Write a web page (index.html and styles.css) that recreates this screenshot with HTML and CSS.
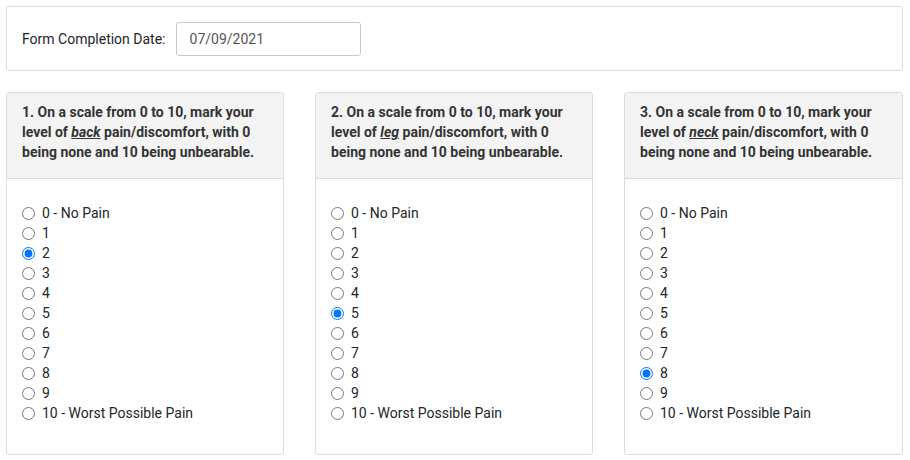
FILE: index.html
```html
<!DOCTYPE html>
<html>
<head>
<meta charset="utf-8">
<link rel="stylesheet" href="styles.css">
</head>
<body>
<div class="page">
  <div class="date-card">
    <label class="date-label" for="d">Form Completion Date:</label>
    <input class="date-input" id="d" type="text" value="07/09/2021">
  </div>
  <div class="cards">
    <div class="card">
      <div class="card-head">1. On a scale from 0 to 10, mark your level of <em>back</em> pain/discomfort, with 0 being none and 10 being unbearable.</div>
      <div class="card-body">
        <label class="opt"><input type="radio" name="q1"><span>0 - No Pain</span></label>
        <label class="opt"><input type="radio" name="q1"><span>1</span></label>
        <label class="opt"><input type="radio" name="q1" checked><span>2</span></label>
        <label class="opt"><input type="radio" name="q1"><span>3</span></label>
        <label class="opt"><input type="radio" name="q1"><span>4</span></label>
        <label class="opt"><input type="radio" name="q1"><span>5</span></label>
        <label class="opt"><input type="radio" name="q1"><span>6</span></label>
        <label class="opt"><input type="radio" name="q1"><span>7</span></label>
        <label class="opt"><input type="radio" name="q1"><span>8</span></label>
        <label class="opt"><input type="radio" name="q1"><span>9</span></label>
        <label class="opt"><input type="radio" name="q1"><span>10 - Worst Possible Pain</span></label>
      </div>
    </div>
    <div class="card">
      <div class="card-head">2. On a scale from 0 to 10, mark your level of <em>leg</em> pain/discomfort, with 0 being none and 10 being unbearable.</div>
      <div class="card-body">
        <label class="opt"><input type="radio" name="q2"><span>0 - No Pain</span></label>
        <label class="opt"><input type="radio" name="q2"><span>1</span></label>
        <label class="opt"><input type="radio" name="q2"><span>2</span></label>
        <label class="opt"><input type="radio" name="q2"><span>3</span></label>
        <label class="opt"><input type="radio" name="q2"><span>4</span></label>
        <label class="opt"><input type="radio" name="q2" checked><span>5</span></label>
        <label class="opt"><input type="radio" name="q2"><span>6</span></label>
        <label class="opt"><input type="radio" name="q2"><span>7</span></label>
        <label class="opt"><input type="radio" name="q2"><span>8</span></label>
        <label class="opt"><input type="radio" name="q2"><span>9</span></label>
        <label class="opt"><input type="radio" name="q2"><span>10 - Worst Possible Pain</span></label>
      </div>
    </div>
    <div class="card">
      <div class="card-head">3. On a scale from 0 to 10, mark your level of <em>neck</em> pain/discomfort, with 0 being none and 10 being unbearable.</div>
      <div class="card-body">
        <label class="opt"><input type="radio" name="q3"><span>0 - No Pain</span></label>
        <label class="opt"><input type="radio" name="q3"><span>1</span></label>
        <label class="opt"><input type="radio" name="q3"><span>2</span></label>
        <label class="opt"><input type="radio" name="q3"><span>3</span></label>
        <label class="opt"><input type="radio" name="q3"><span>4</span></label>
        <label class="opt"><input type="radio" name="q3"><span>5</span></label>
        <label class="opt"><input type="radio" name="q3"><span>6</span></label>
        <label class="opt"><input type="radio" name="q3"><span>7</span></label>
        <label class="opt"><input type="radio" name="q3" checked><span>8</span></label>
        <label class="opt"><input type="radio" name="q3"><span>9</span></label>
        <label class="opt"><input type="radio" name="q3"><span>10 - Worst Possible Pain</span></label>
      </div>
    </div>
  </div>
</div>
</body>
</html>
```
FILE: styles.css
```css
* { box-sizing: border-box; }
body {
  margin: 0;
  background: #fff;
  font-family: Roboto, "Liberation Sans", sans-serif;
  font-size: 14px;
  color: #212529;
}
.page {
  padding: 6px 7px 0 6px;
}
.date-card {
  display: flex;
  align-items: center;
  height: 65px;
  border: 1px solid #dcdcdc;
  border-radius: 3px;
  padding: 0 15px;
}
.date-label {
  color: #212529;
  margin-right: 10px;
  font-size: 14px;
}
.date-input {
  width: 185px;
  height: 34px;
  border: 1px solid #c8c8c8;
  border-radius: 3px;
  padding: 0 13px;
  font-family: Roboto, "Liberation Sans", sans-serif;
  font-size: 14px;
  color: #555;
  outline: none;
}
.cards {
  display: grid;
  grid-template-columns: 278px 278px 279px;
  justify-content: space-between;
  margin-top: 21px;
}
.card {
  border: 1px solid #dcdcdc;
  border-radius: 3px;
  height: 363px;
  display: flex;
  flex-direction: column;
  overflow: hidden;
}
.card-head {
  background: #f3f3f3;
  border-bottom: 1px solid #dcdcdc;
  height: 86px;
  flex: none;
  padding: 9px 15px 0 15px;
  font-weight: bold;
  line-height: 20px;
  color: #333;
}
.card-head em {
  text-decoration: underline;
}
.card-body {
  padding: 24px 15px 0 15px;
  display: flex;
  flex-direction: column;
}
.opt {
  display: flex;
  align-items: center;
  height: 20px;
  line-height: 20px;
}
.opt input {
  margin: 0 7px 0 0;
  width: 13px;
  height: 13px;
}
```
